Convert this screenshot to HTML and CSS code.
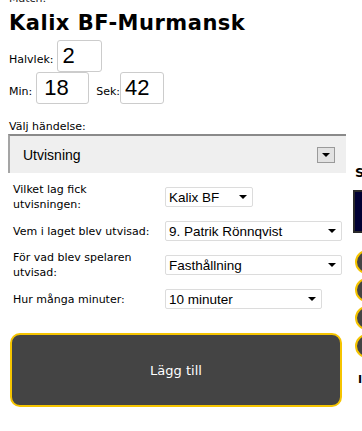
FILE: index.html
```
<!doctype html>
<html>
<head>
<meta charset="utf-8">
<title>Lägg till händelse</title>
<link rel="stylesheet" href="styles.css">
</head>
<body>
<div class="page">
	<div class="main">
		<div class="match_label">Match:</div>
		<h1 class="match_name">Kalix BF-Murmansk</h1>

		<div class="time_row">
			<span class="lbl lbl_halvlek">Halvlek:</span>
			<span class="num num_halvlek">2</span>
		</div>
		<div class="time_row">
			<span class="lbl lbl_min">Min:</span>
			<span class="num num_min">18</span>
			<span class="lbl lbl_sek">Sek:</span>
			<span class="num num_sek">42</span>
		</div>

		<div class="lbl event_label">Välj händelse:</div>
		<div class="event_select">
			<span class="event_value">Utvisning</span>
			<span class="event_btn"><i class="tri"></i></span>
		</div>

		<div class="rows">
			<div class="row">
				<div class="lbl row_label">Vilket lag fick<br>utvisningen:</div>
				<div class="sel sel_team"><span>Kalix BF</span><i class="tri"></i></div>
			</div>
			<div class="row">
				<div class="lbl row_label">Vem i laget blev utvisad:</div>
				<div class="sel sel_wide"><span>9. Patrik Rönnqvist</span><i class="tri"></i></div>
			</div>
			<div class="row">
				<div class="lbl row_label">För vad blev spelaren<br>utvisad:</div>
				<div class="sel sel_wide"><span>Fasthållning</span><i class="tri"></i></div>
			</div>
			<div class="row">
				<div class="lbl row_label">Hur många minuter:</div>
				<div class="sel sel_min"><span>10 minuter</span><i class="tri"></i></div>
			</div>
		</div>

		<div class="add_btn">Lägg till</div>
	</div>

	<div class="side">
		<div class="side_title">S</div>
		<div class="side_box"></div>
		<div class="side_list">
			<div class="side_item"></div>
			<div class="side_item"></div>
			<div class="side_item"></div>
			<div class="side_item"></div>
		</div>
		<div class="side_foot">I</div>
	</div>
</div>
</body>
</html>
```

FILE: styles.css
```
html,body{margin:0;padding:0;background:#fff;}
body{overflow:hidden;font-family:"DejaVu Sans",Verdana,sans-serif;color:#000;}

.page{display:flex;align-items:flex-start;gap:7px;padding-left:8px;width:500px;}
.main{width:338px;flex:none;}
.side{width:120px;flex:none;}

.lbl{font-size:11px;line-height:13px;}
.match_label{font-size:11px;line-height:13px;margin-top:-8px;padding-left:1px;color:#222;}
.match_name{font-size:21px;line-height:24px;letter-spacing:0.5px;font-weight:bold;margin:6px 0 0;padding-left:1px;}

/* tid */
.time_row{display:flex;align-items:baseline;padding-left:1px;}
.match_name + .time_row{margin-top:5px;}
.num{display:block;box-sizing:border-box;height:32px;border:1px solid #ccc;border-radius:3px;background:#fff;font:22px/30px "Liberation Sans",Arial,sans-serif;padding:0 4px;}
.lbl_halvlek{margin-right:4px;}
.num_halvlek{width:45px;}
.lbl_min{margin-right:4px;}
.num_min{width:53px;padding-left:7px;}
.lbl_sek{margin-left:7px;}
.num_sek{width:44px;}

/* händelse */
.event_label{margin-top:16px;padding-left:1px;}
.event_select{display:flex;align-items:center;justify-content:space-between;box-sizing:border-box;height:39px;margin-top:1px;background:#efefef;border-top:2px solid #8a8a8a;border-left:2px solid #a5a5a5;padding:0 11px 0 13px;}
.event_value{font:14px "Liberation Sans",Arial,sans-serif;}
.event_btn{display:flex;align-items:center;justify-content:center;box-sizing:border-box;width:18px;height:16px;border:1px solid #9a9a9a;background:#e2e2e2;}

.tri{display:block;width:0;height:0;border-left:4px solid transparent;border-right:4px solid transparent;border-top:4px solid #000;}

/* rader */
.rows{padding:7px 0 0 5px;}
.row{display:flex;align-items:center;height:34px;}
.row_label{width:152px;line-height:15px;}
.sel{display:flex;align-items:center;justify-content:space-between;box-sizing:border-box;height:20px;border:1px solid #dcdcdc;border-radius:2px;background:#fff;padding:0 5px 0 3px;font:13.5px "Liberation Sans",Arial,sans-serif;}
.sel_team{width:88px;}
.sel_wide{width:177px;}
.sel_min{width:157px;}

.add_btn{box-sizing:border-box;height:74px;margin:17px 4px 0 2px;background:#444;border:2px solid #f5c400;border-radius:10px;color:#fff;font-size:13px;display:flex;align-items:center;justify-content:center;}

/* höger kolumn */
.side_title{font-size:13px;line-height:16px;font-weight:bold;margin:165px 0 0 2px;}
.side_box{height:43px;box-sizing:border-box;margin-top:9px;background:#000033;border:2px solid #2a2a2a;}
.side_list{display:flex;flex-direction:column;gap:4px;margin:17px 0 0 2px;}
.side_item{height:24px;box-sizing:border-box;background:#444;border:2px solid #f5c400;border-radius:12px;}
.side_foot{font-size:11px;line-height:13px;font-weight:bold;margin:15px 0 0 5px;}
```
